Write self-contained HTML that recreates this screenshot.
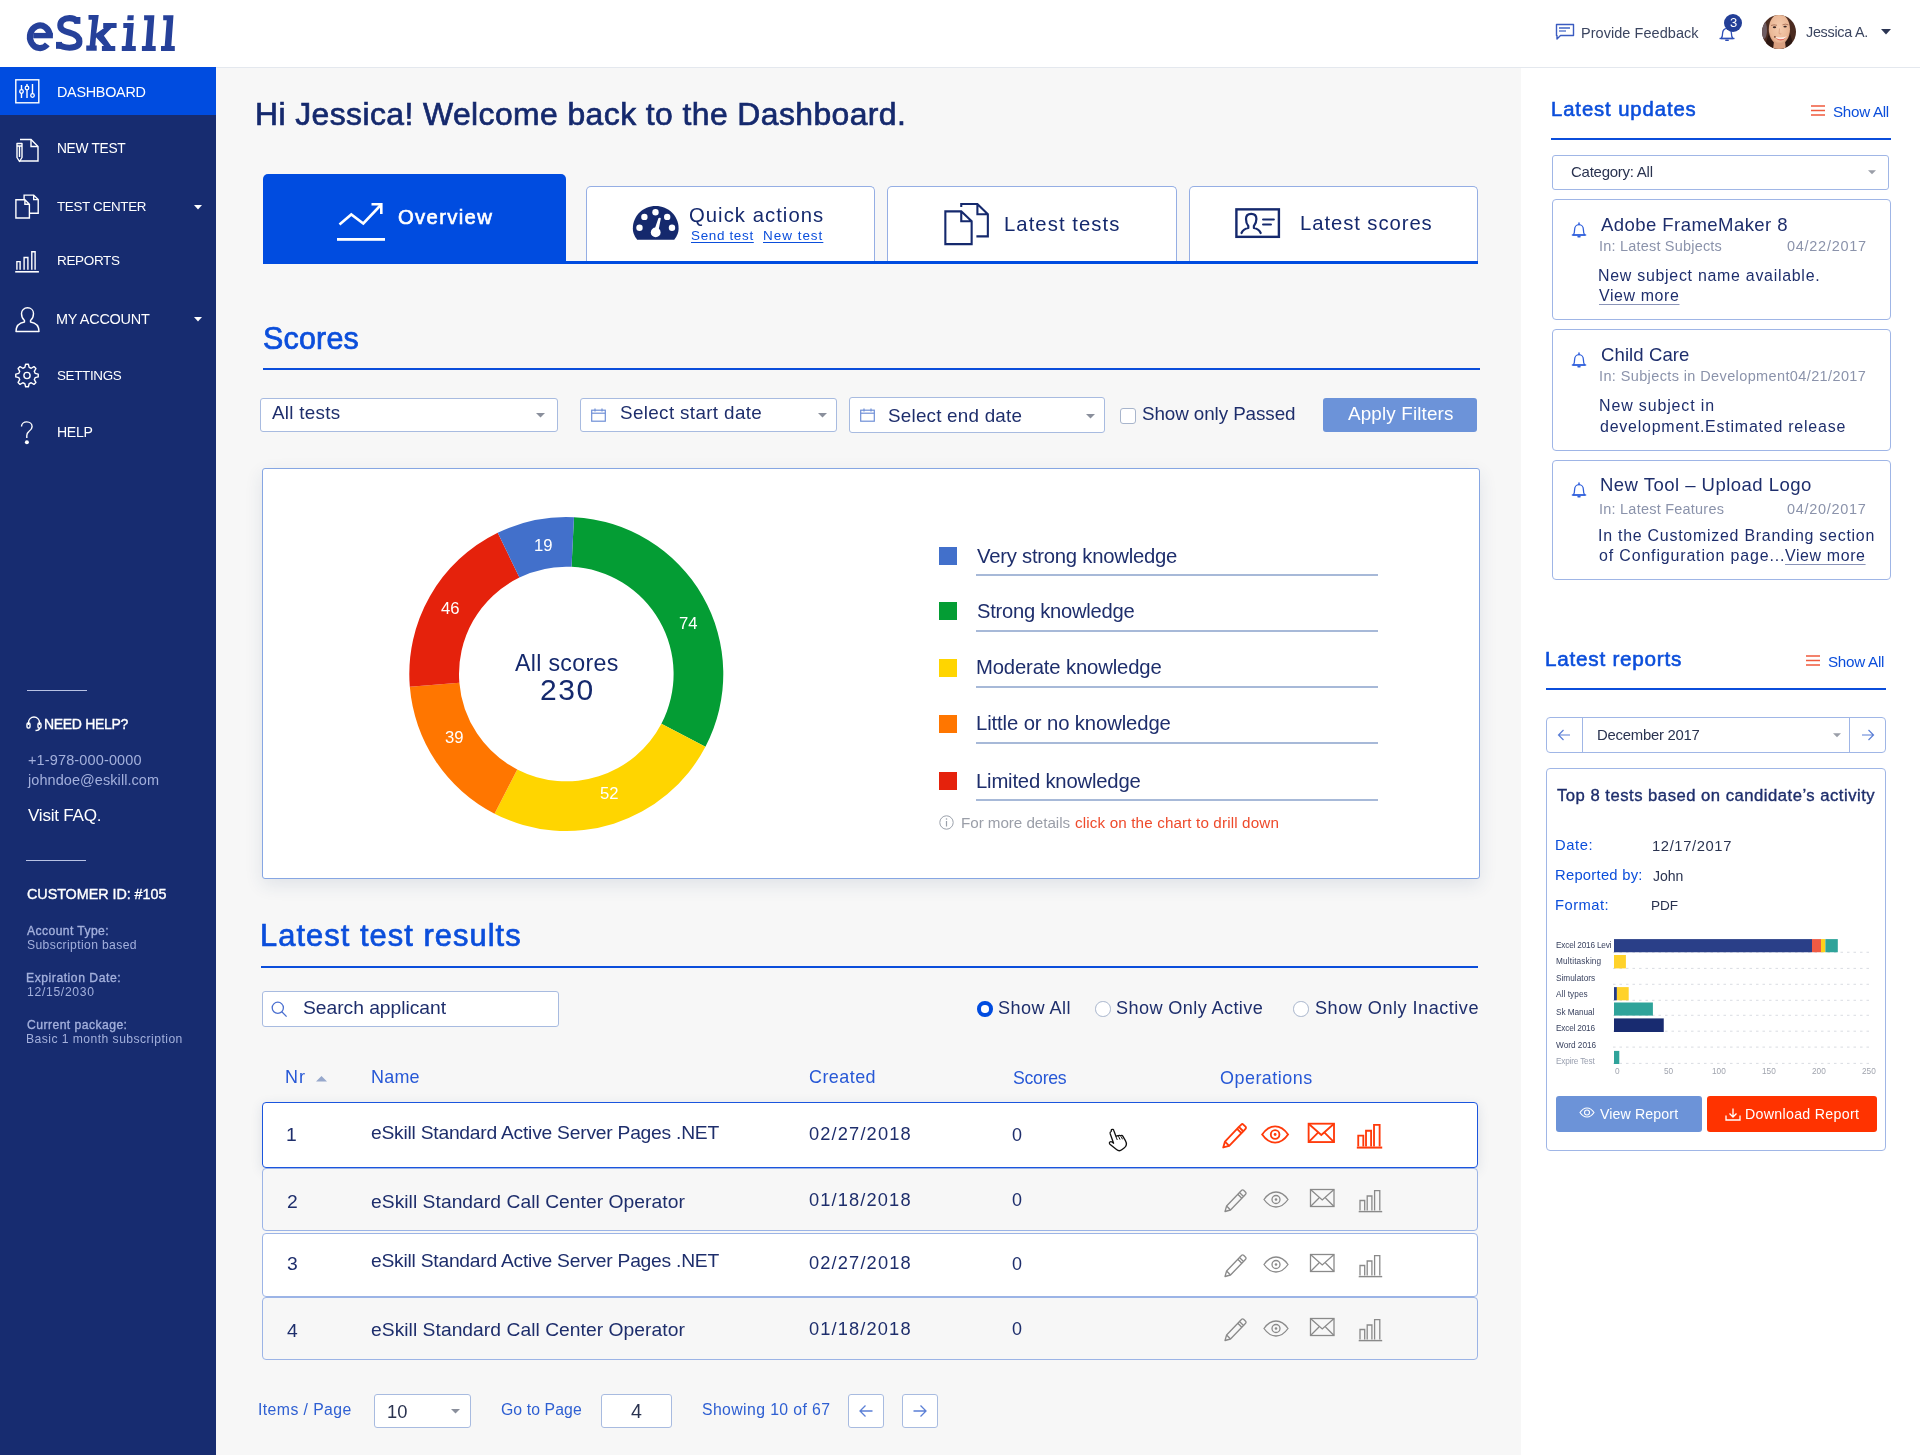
<!DOCTYPE html>
<html><head><meta charset="utf-8"><title>eSkill Dashboard</title>
<style>
html,body{margin:0;padding:0;}
body{width:1920px;height:1455px;position:relative;overflow:hidden;background:#f7f7f7;font-family:"Liberation Sans",sans-serif;}
.t{position:absolute;white-space:nowrap;will-change:transform;}
.a{position:absolute;}

.box{position:absolute;box-sizing:border-box;}
svg{position:absolute;overflow:visible;}

</style></head><body>
<div class="a" style="left:0;top:0;width:1920px;height:67px;background:#fff;border-bottom:1px solid #e4e8ee;box-sizing:content-box"></div>
<div class="a" style="left:0;top:67px;width:216px;height:1388px;background:#172c70"></div>
<div class="a" style="left:0;top:67px;width:216px;height:48px;background:#004ce0"></div>
<div class="a" style="left:1521px;top:68px;width:399px;height:1387px;background:#fff"></div>
<svg style="left:0;top:0" width="200" height="67" viewBox="0 0 200 67"><g fill="#26419a">
<path d="M144.1 15.2H154.4L152.2 45.9H155.7V50.9H141.9V45.9H145.6L147.6 20.3H144.1z"/>
<path d="M163.2 15.2H173.5L171.3 45.9H174.8V50.9H161V45.9H164.7L166.7 20.3H163.2z"/>
<path d="M127.6 15.2H133.8L133.4 20.3H127.2z"/>
<path d="M123.3 22.9H133.8L132 45.9H135.8V50.9H121.8V45.9H125.5L127.2 27.9H123.3z"/>
<path d="M88.5 15H98.75L96.3 33.4L104.1 27.9H103.2V22.9H116.6V27.9H111.5L103.9 35.8L111.1 45.9H115.25V50.9H101.9V45.9H104L96 37.2L95.3 45.6H96.7V50.8H86.25V45.6H89.7L92 19.8H88.5z"/>
<path d="M33.2 32.9H52.9V38.3H33.2z"/>
<rect x="74.2" y="17" width="6.2" height="6.9"/>
<rect x="56" y="41.9" width="6" height="6.9"/>
</g>
<path d="M49.9 35.8A10 11.25 0 1 0 47.3 44.4" fill="none" stroke="#26419a" stroke-width="6.2"/>
<path d="M77.4 21.5C75 18.8 72.5 18.1 69.5 18.1C63.6 18.1 60.3 21 60.3 25.3C60.3 30 64.3 31.4 69.8 32.8C75.6 34.3 79.4 36.4 79.4 41.6C79.4 46 75.6 47.7 69.5 47.7C64.8 47.7 61.2 46.7 59 44.3" fill="none" stroke="#26419a" stroke-width="6.1"/>
</svg>
<svg style="left:1555px;top:23px" width="20" height="18" viewBox="0 0 20 18">
<path d="M1.5 1.5h17v11h-13l-3.5 3.5v-3.5h-0.5z" fill="none" stroke="#3a5bc0" stroke-width="1.4" stroke-linejoin="round"/>
<rect x="4" y="4" width="11" height="2" fill="#6f8bd4"/><rect x="4" y="7" width="7" height="2" fill="#8aa0dc"/>
</svg>
<div class="t" style="left:1580.70px;top:25.68px;font:normal 400 14.49px/1 'Liberation Sans';color:#3b4560;letter-spacing:0.053px;">Provide Feedback</div>
<svg style="left:1718px;top:24px" width="18" height="18" viewBox="0 0 18 18">
<path d="M3 14.5c1.3-1.2 1.6-2.6 1.6-5.2 0-2.9 1.9-5 4.4-5s4.4 2.1 4.4 5c0 2.6 0.3 4 1.6 5.2z" fill="none" stroke="#2e4fb8" stroke-width="1.3" stroke-linejoin="round"/>
<path d="M1.5 14.5h15" stroke="#2e4fb8" stroke-width="1.3"/><path d="M7.8 16.2h2.4" stroke="#2e4fb8" stroke-width="1.5" stroke-linecap="round"/>
</svg>
<div class="a" style="left:1724px;top:14px;width:18px;height:18px;border-radius:50%;background:#233f97"></div>
<div class="t" style="left:1729.50px;top:16.42px;font:normal 400 13.04px/1 'Liberation Sans';color:#fff;">3</div>
<svg style="left:1762px;top:15px" width="34" height="34" viewBox="0 0 34 34">
<defs><clipPath id="avc"><circle cx="17" cy="17" r="17"/></clipPath>
<radialGradient id="skin" cx="0.5" cy="0.45" r="0.6"><stop offset="0" stop-color="#f6cdb0"/><stop offset="0.75" stop-color="#eab796"/><stop offset="1" stop-color="#c98a6a"/></radialGradient></defs>
<g clip-path="url(#avc)">
<rect width="34" height="34" fill="#4b2b20"/>
<ellipse cx="2" cy="15" rx="3" ry="9" fill="#6e5c62"/>
<path d="M3 34C4 26 6 20 9 14L26 14C29 20 31 27 31 34z" fill="#2e1812"/>
<ellipse cx="17.4" cy="14.2" rx="10.6" ry="15.2" fill="url(#skin)"/>
<path d="M12 26Q17.5 32 23 26L24 35H11z" fill="#d9a080"/>
<path d="M9 10.5Q12 9.2 15 10.3M20.5 9.8Q23.5 8.6 26.3 9.8" stroke="#a0664e" stroke-width="0.8" fill="none"/>
<ellipse cx="12.5" cy="12.3" rx="1.7" ry="0.95" fill="#3a2624"/><ellipse cx="23.1" cy="11.6" rx="1.7" ry="0.95" fill="#3a2624"/>
<path d="M17.5 13.5L17 18.5Q18 19.4 19.3 18.7" stroke="#d59878" stroke-width="0.7" fill="none"/>
<path d="M12.8 21.8Q19 27.5 25 21.2Q19 23.4 12.8 21.8z" fill="#fbeee8"/>
<path d="M13.5 23Q19 28.2 24.4 22.4Q19 26 13.5 23z" fill="#e0645c"/><circle cx="12.9" cy="21.9" r="0.8" fill="#5a2c24"/>
</g></svg>
<div class="t" style="left:1805.60px;top:25.19px;font:normal 400 14.36px/1 'Liberation Sans';color:#3b4560;letter-spacing:-0.272px;">Jessica A.</div>
<svg style="left:1881px;top:29px" width="10" height="6" viewBox="0 0 10 6"><path d="M0 0h10l-5 5.5z" fill="#2b3553"/></svg>
<div class="t" style="left:57.00px;top:84.79px;font:normal 400 14.36px/1 'Liberation Sans';color:#ffffff;letter-spacing:-0.261px;">DASHBOARD</div>
<div class="t" style="left:56.50px;top:142.30px;font:normal 400 13.76px/1 'Liberation Sans';color:#ffffff;letter-spacing:-0.306px;">NEW TEST</div>
<div class="t" style="left:57.30px;top:199.62px;font:normal 400 13.39px/1 'Liberation Sans';color:#ffffff;letter-spacing:-0.323px;">TEST CENTER</div>
<div class="t" style="left:56.50px;top:253.52px;font:normal 400 13.51px/1 'Liberation Sans';color:#ffffff;letter-spacing:-0.335px;">REPORTS</div>
<div class="t" style="left:56.20px;top:311.72px;font:normal 400 14.45px/1 'Liberation Sans';color:#ffffff;letter-spacing:-0.248px;">MY ACCOUNT</div>
<div class="t" style="left:56.70px;top:368.58px;font:normal 400 13.44px/1 'Liberation Sans';color:#ffffff;letter-spacing:-0.347px;">SETTINGS</div>
<div class="t" style="left:56.60px;top:425.00px;font:normal 400 14.12px/1 'Liberation Sans';color:#ffffff;letter-spacing:-0.316px;">HELP</div>
<svg style="left:193.5px;top:205px" width="8" height="5" viewBox="0 0 8 5"><path d="M0 0h8l-4 4.5z" fill="#fff"/></svg>
<svg style="left:193.5px;top:316.5px" width="8" height="5" viewBox="0 0 8 5"><path d="M0 0h8l-4 4.5z" fill="#fff"/></svg>
<svg style="left:15px;top:79px" width="25" height="25" viewBox="0 0 25 25">
<rect x="0.8" y="0.8" width="23" height="23" stroke="#fff" stroke-width="1.4" fill="none"/>
<path d="M6.5 6v13M12 5v14M17.5 5v13" stroke="#fff" stroke-width="1.4" fill="none"/>
<circle cx="6.5" cy="12.5" r="1.8" fill="#004ce0" stroke="#fff" stroke-width="1.3"/>
<circle cx="12" cy="9" r="1.8" fill="#004ce0" stroke="#fff" stroke-width="1.3"/>
<circle cx="17.5" cy="16.5" r="1.8" fill="#004ce0" stroke="#fff" stroke-width="1.3"/>
</svg>
<svg style="left:15px;top:137px" width="25" height="26" viewBox="0 0 25 26">
<path d="M5 2.5h11l7 7v14.5h-18" stroke="#fff" stroke-width="1.4" fill="none"/><path d="M16 2.5v7h7" stroke="#fff" stroke-width="1.4" fill="none"/>
<path d="M2 6.5h5v14l-2.5 4l-2.5-4z" stroke="#fff" stroke-width="1.4" fill="none" stroke-linejoin="round"/><path d="M2 9h5M4.5 9v11" stroke="#fff" stroke-width="1.4" fill="none"/>
</svg>
<svg style="left:15px;top:194px" width="25" height="26" viewBox="0 0 25 26">
<path d="M0.9 5.7H9.9L14.4 10.2V24H0.9zM9.9 5.7V10.2H14.4" stroke="#fff" stroke-width="1.4" fill="none"/>
<path d="M9.1 5.2V1.1H18.7L23.2 5.6V19.3H15M18.7 1.1V5.6H23.2" stroke="#fff" stroke-width="1.4" fill="none"/>
</svg>
<svg style="left:15px;top:251px" width="25" height="22" viewBox="0 0 25 22">
<path d="M1.9 18.7V10.6H5.1V18.7M9.1 18.7V6.5H12.9V18.7M16.8 18.7V0.8H20.1V18.7" stroke="#fff" stroke-width="1.4" fill="none"/><path d="M0.2 20.8H23.9" stroke="#fff" stroke-width="1.6"/>
</svg>
<svg style="left:15px;top:307px" width="25" height="26" viewBox="0 0 25 26">
<path d="M9.5 13.5c-2.2-1.8-3-4.5-3-7 0-3.3 2.6-5.7 6-5.7s6 2.4 6 5.7c0 2.5-0.8 5.2-3 7v1.5c5 0.8 8.5 4 8.5 9.5h-23c0-5.5 3.5-8.7 8.5-9.5z" stroke="#fff" stroke-width="1.4" fill="none" stroke-linejoin="round"/>
</svg>
<svg style="left:14px;top:362px" width="26" height="27" viewBox="0 0 26 27">
<path d="M10.83 5.39L11.62 2.28L14.38 2.28L15.17 5.39L17.20 6.23L19.96 4.60L21.90 6.54L20.27 9.30L21.11 11.33L24.22 12.12L24.22 14.88L21.11 15.67L20.27 17.70L21.90 20.46L19.96 22.40L17.20 20.77L15.17 21.61L14.38 24.72L11.62 24.72L10.83 21.61L8.80 20.77L6.04 22.40L4.10 20.46L5.73 17.70L4.89 15.67L1.78 14.88L1.78 12.12L4.89 11.33L5.73 9.30L4.10 6.54L6.04 4.60L8.80 6.23z" stroke="#fff" stroke-width="1.4" fill="none" stroke-linejoin="round"/>
<circle cx="13" cy="13.5" r="3.1" stroke="#fff" stroke-width="1.4" fill="none" stroke-width="1.6"/>
</svg>
<svg style="left:20px;top:421px" width="14" height="24" viewBox="0 0 14 24">
<path d="M1.5 5.5c0-2.6 2.3-4.6 5.3-4.6s5.3 2 5.3 4.8c0 2.4-1.6 3.6-3.3 4.9-1.4 1-2 2-2 4v2.5" stroke="#fff" stroke-width="1.4" fill="none"/>
<circle cx="6.9" cy="21.2" r="2" fill="#fff"/>
</svg>
<div class="a" style="left:27px;top:690px;width:60px;height:1px;background:#b8c2e4"></div>
<div class="a" style="left:26px;top:860px;width:60px;height:1px;background:#b8c2e4"></div>
<svg style="left:26px;top:716px" width="16" height="15" viewBox="0 0 16 15">
<path d="M2.5 9v-2.5c0-3 2.4-5.5 5.5-5.5s5.5 2.5 5.5 5.5v2.5" stroke="#fff" stroke-width="1.4" fill="none" stroke-width="1.2"/>
<rect x="1" y="7" width="3" height="5" rx="1.2" stroke="#fff" stroke-width="1.4" fill="none" stroke-width="1.2"/><rect x="12" y="7" width="3" height="5" rx="1.2" stroke="#fff" stroke-width="1.4" fill="none" stroke-width="1.2"/>
<path d="M13.5 12c0 1.5-1.5 2.5-4 2.5" stroke="#fff" stroke-width="1.4" fill="none" stroke-width="1.2"/>
</svg>
<div class="t" style="left:44.40px;top:717.39px;font:normal 400 14.01px/1 'Liberation Sans';color:#ffffff;letter-spacing:-0.306px;-webkit-text-stroke:0.35px #ffffff;">NEED HELP?</div>
<div class="t" style="left:27.50px;top:752.98px;font:normal 400 14.49px/1 'Liberation Sans';color:#a3b0dc;letter-spacing:0.144px;">+1-978-000-0000</div>
<div class="t" style="left:27.70px;top:772.98px;font:normal 400 14.49px/1 'Liberation Sans';color:#a3b0dc;letter-spacing:0.072px;">johndoe@eskill.com</div>
<div class="t" style="left:27.50px;top:807.47px;font:normal 400 17.1px/1 'Liberation Sans';color:#ffffff;letter-spacing:-0.237px;">Visit FAQ.</div>
<div class="t" style="left:26.70px;top:886.50px;font:normal 400 14.35px/1 'Liberation Sans';color:#ffffff;letter-spacing:-0.041px;-webkit-text-stroke:0.36px #ffffff;">CUSTOMER ID: #105</div>
<div class="t" style="left:26.70px;top:924.56px;font:normal 400 12.17px/1 'Liberation Sans';color:#a3b0dc;letter-spacing:0.404px;-webkit-text-stroke:0.34px #a3b0dc;">Account Type:</div>
<div class="t" style="left:26.70px;top:938.56px;font:normal 400 12.17px/1 'Liberation Sans';color:#a3b0dc;letter-spacing:0.363px;">Subscription based</div>
<div class="t" style="left:25.70px;top:972.46px;font:normal 400 12.17px/1 'Liberation Sans';color:#a3b0dc;letter-spacing:0.539px;-webkit-text-stroke:0.34px #a3b0dc;">Expiration Date:</div>
<div class="t" style="left:26.70px;top:986.46px;font:normal 400 12.17px/1 'Liberation Sans';color:#a3b0dc;letter-spacing:0.680px;">12/15/2030</div>
<div class="t" style="left:26.70px;top:1019.46px;font:normal 400 12.17px/1 'Liberation Sans';color:#a3b0dc;letter-spacing:0.449px;-webkit-text-stroke:0.34px #a3b0dc;">Current package:</div>
<div class="t" style="left:25.70px;top:1033.26px;font:normal 400 12.17px/1 'Liberation Sans';color:#a3b0dc;letter-spacing:0.444px;">Basic 1 month subscription</div>
<div class="t" style="left:254.50px;top:99.30px;font:normal 400 31.88px/1 'Liberation Sans';color:#15296d;letter-spacing:0.420px;-webkit-text-stroke:0.67px #15296d;">Hi Jessica! Welcome back to the Dashboard.</div>
<div class="box" style="left:263px;top:174px;width:303px;height:90px;background:#004ce0;border-radius:5px 5px 0 0"></div>
<div class="box" style="left:585.5px;top:186px;width:289.0px;height:77px;background:#fff;border:1px solid #95aee4;border-bottom:none;border-radius:5px 5px 0 0"></div>
<div class="box" style="left:887px;top:186px;width:289.5px;height:77px;background:#fff;border:1px solid #95aee4;border-bottom:none;border-radius:5px 5px 0 0"></div>
<div class="box" style="left:1188.5px;top:186px;width:289.0px;height:77px;background:#fff;border:1px solid #95aee4;border-bottom:none;border-radius:5px 5px 0 0"></div>
<div class="a" style="left:263px;top:261px;width:1215px;height:3px;background:#004ce0"></div>
<svg style="left:336px;top:202px" width="50" height="40" viewBox="0 0 50 40">
<path d="M3.5 22.5L15.3 12.5L27.3 21.5L44.8 3" fill="none" stroke="#fff" stroke-width="2.6" stroke-linejoin="miter"/>
<path d="M35.5 2.3h9.8v9.8" fill="none" stroke="#fff" stroke-width="2.6"/>
<rect x="1" y="36" width="48" height="2.8" fill="#fff"/>
</svg>
<div class="t" style="left:397.50px;top:206.55px;font:normal 400 20.29px/1 'Liberation Sans';color:#fff;letter-spacing:1.332px;-webkit-text-stroke:0.61px #fff;">Overview</div>
<svg style="left:632px;top:206px" width="48" height="35" viewBox="0 0 48 35">
<path d="M5.2 33.8C1.8 29.5 0.85 26 0.85 22.5C0.85 10 11 0.1 23.7 0.1S46.6 10 46.6 22.5C46.6 26 45.6 29.5 42.2 33.8z" fill="#15296d"/>
<circle cx="23.5" cy="6.2" r="3.2" fill="#fff"/><circle cx="12.4" cy="10.9" r="3.2" fill="#fff"/><circle cx="35.2" cy="10.9" r="3.2" fill="#fff"/>
<circle cx="7.5" cy="21.7" r="3.2" fill="#fff"/><circle cx="40" cy="21.7" r="3.2" fill="#fff"/>
<path d="M21.8 25.5L26.4 12.3C26.7 11.4 28.9 11.6 28.8 12.6L26.2 26.2z" fill="#fff"/><circle cx="23.7" cy="26.4" r="4.9" fill="#fff"/>
</svg>
<div class="t" style="left:689.40px;top:204.65px;font:normal 400 20.29px/1 'Liberation Sans';color:#15296d;letter-spacing:1.034px;">Quick actions</div>
<div class="t" style="left:691.00px;top:229.14px;font:normal 400 13.48px/1 'Liberation Sans';color:#0b4edb;letter-spacing:0.654px;text-decoration:underline;text-underline-offset:2px;">Send test</div>
<div class="t" style="left:763.40px;top:229.14px;font:normal 400 13.48px/1 'Liberation Sans';color:#0b4edb;letter-spacing:0.992px;text-decoration:underline;text-underline-offset:2px;">New test</div>
<svg style="left:943px;top:202px" width="48" height="45" viewBox="0 0 48 45">
<path d="M2.35 9.35H18.25L28.65 19.25V42.15H2.35zM18.25 9.35V19.25H28.65" fill="none" stroke="#15296d" stroke-width="2.1"/>
<path d="M18.25 5V2.05H34.4L44.85 12.2V34.35H33.4M34.4 2.05V12.2H44.85" fill="none" stroke="#15296d" stroke-width="2.1"/>
</svg>
<div class="t" style="left:1003.80px;top:213.55px;font:normal 400 20.29px/1 'Liberation Sans';color:#15296d;letter-spacing:1.057px;">Latest tests</div>
<svg style="left:1234px;top:207px" width="48" height="33" viewBox="0 0 48 33">
<rect x="2.4" y="2.35" width="42.5" height="27.5" fill="none" stroke="#15296d" stroke-width="2.4"/>
<path d="M7.5 26C8.8 23 11.5 21.5 14.3 21V19C12.5 17 12 14.5 12 12C12 8.5 14 6.8 17.2 6.8C20.4 6.8 22.4 8.5 22.4 12C22.4 14.5 21.5 17 19.9 19V21C22.7 21.5 25.4 23 26.7 26" fill="none" stroke="#15296d" stroke-width="2.2" stroke-linecap="round" stroke-linejoin="round"/>
<path d="M29.1 12.5H39.8M29.1 17.5H36.9" stroke="#15296d" stroke-width="2.2" stroke-linecap="round"/>
</svg>
<div class="t" style="left:1300.40px;top:213.45px;font:normal 400 20.29px/1 'Liberation Sans';color:#15296d;letter-spacing:0.927px;">Latest scores</div>
<div class="t" style="left:262.60px;top:323.13px;font:normal 400 30.43px/1 'Liberation Sans';color:#0b4edb;letter-spacing:0.226px;-webkit-text-stroke:0.73px #0b4edb;">Scores</div>
<div class="a" style="left:263px;top:368px;width:1217px;height:2px;background:#0b4edb"></div>
<div class="box" style="left:259.7px;top:397.5px;width:298.7px;height:34.89999999999998px;background:#fff;border:1px solid #a8bbe0;border-radius:3px"></div>
<div class="t" style="left:272.00px;top:404.39px;font:normal 400 18.84px/1 'Liberation Sans';color:#1e2e6c;letter-spacing:0.287px;">All tests</div>
<svg style="left:535.8px;top:413px" width="9" height="5" viewBox="0 0 9 5"><path d="M0 0h9l-4.5 4.5z" fill="#8a8f9c"/></svg>
<div class="box" style="left:580.3px;top:397.5px;width:256.70000000000005px;height:34.89999999999998px;background:#fff;border:1px solid #a8bbe0;border-radius:3px"></div>
<svg style="left:590.6px;top:407.5px" width="15" height="14" viewBox="0 0 15 14">
<rect x="0.7" y="2.2" width="13.6" height="11" fill="none" stroke="#6f8fd6" stroke-width="1.2"/><path d="M0.7 5.2h13.6" stroke="#6f8fd6" stroke-width="1.2"/>
<path d="M4 0.5v3M11 0.5v3" stroke="#6f8fd6" stroke-width="1.2"/></svg>
<div class="t" style="left:619.70px;top:404.39px;font:normal 400 18.84px/1 'Liberation Sans';color:#1e2e6c;letter-spacing:0.357px;">Select start date</div>
<svg style="left:817.7px;top:413px" width="9" height="5" viewBox="0 0 9 5"><path d="M0 0h9l-4.5 4.5z" fill="#8a8f9c"/></svg>
<div class="box" style="left:849.3px;top:397.2px;width:256.10000000000014px;height:35.400000000000034px;background:#fff;border:1px solid #a8bbe0;border-radius:3px"></div>
<svg style="left:859.6px;top:408px" width="15" height="14" viewBox="0 0 15 14">
<rect x="0.7" y="2.2" width="13.6" height="11" fill="none" stroke="#6f8fd6" stroke-width="1.2"/><path d="M0.7 5.2h13.6" stroke="#6f8fd6" stroke-width="1.2"/>
<path d="M4 0.5v3M11 0.5v3" stroke="#6f8fd6" stroke-width="1.2"/></svg>
<div class="t" style="left:888.00px;top:406.99px;font:normal 400 18.84px/1 'Liberation Sans';color:#1e2e6c;letter-spacing:0.223px;">Select end date</div>
<svg style="left:1085.8px;top:414px" width="9" height="5" viewBox="0 0 9 5"><path d="M0 0h9l-4.5 4.5z" fill="#8a8f9c"/></svg>
<div class="box" style="left:1120px;top:407.5px;width:16px;height:16px;background:#fff;border:1px solid #a8b5cc;border-radius:3px"></div>
<div class="t" style="left:1141.50px;top:405.24px;font:normal 400 18.84px/1 'Liberation Sans';color:#1e2e6c;letter-spacing:-0.095px;">Show only Passed</div>
<div class="box" style="left:1323px;top:398px;width:154px;height:34px;background:#6c93d9;border-radius:3px"></div>
<div class="t" style="left:1348.00px;top:405.24px;font:normal 400 18.84px/1 'Liberation Sans';color:#fff;letter-spacing:0.153px;">Apply Filters</div>
<div class="box" style="left:262px;top:468px;width:1218px;height:411px;background:#fff;border:1px solid #86a6e3;border-radius:3px;box-shadow:0 6px 18px rgba(40,60,110,.11)"></div>
<svg style="left:0;top:0" width="1920" height="1455"><path d="M573.97 517.19A157 157 0 0 1 705.43 746.74L661.39 723.71A107.3 107.3 0 0 0 571.54 566.83z" fill="#049d34"/><path d="M705.43 746.74A157 157 0 0 1 494.54 813.64L517.25 769.43A107.3 107.3 0 0 0 661.39 723.71z" fill="#ffd500"/><path d="M494.54 813.64A157 157 0 0 1 409.83 686.86L459.36 682.79A107.3 107.3 0 0 0 517.25 769.43z" fill="#ff7600"/><path d="M409.83 686.86A157 157 0 0 1 497.72 532.77L519.43 577.48A107.3 107.3 0 0 0 459.36 682.79z" fill="#e5220c"/><path d="M497.72 532.77A157 157 0 0 1 573.97 517.19L571.54 566.83A107.3 107.3 0 0 0 519.43 577.48z" fill="#4270cb"/></svg>
<div class="t" style="left:534.37px;top:538.33px;font:normal 400 16.67px/1 'Liberation Sans';color:#fff;">19</div>
<div class="t" style="left:678.67px;top:615.83px;font:normal 400 16.67px/1 'Liberation Sans';color:#fff;">74</div>
<div class="t" style="left:599.57px;top:785.83px;font:normal 400 16.67px/1 'Liberation Sans';color:#fff;">52</div>
<div class="t" style="left:444.57px;top:729.53px;font:normal 400 16.67px/1 'Liberation Sans';color:#fff;">39</div>
<div class="t" style="left:441.37px;top:601.03px;font:normal 400 16.67px/1 'Liberation Sans';color:#fff;">46</div>
<div class="t" style="left:515.05px;top:651.79px;font:normal 400 23.19px/1 'Liberation Sans';color:#15296d;letter-spacing:0.310px;">All scores</div>
<div class="t" style="left:540.00px;top:675.10px;font:normal 400 30px/1 'Liberation Sans';color:#15296d;letter-spacing:1.615px;">230</div>
<div class="a" style="left:939px;top:547px;width:18px;height:18px;background:#4270cb"></div>
<div class="t" style="left:976.80px;top:545.75px;font:normal 400 20.29px/1 'Liberation Sans';color:#1e2e6c;letter-spacing:-0.245px;">Very strong knowledge</div>
<div class="a" style="left:939px;top:602.4px;width:18px;height:18px;background:#049d34"></div>
<div class="t" style="left:976.80px;top:601.16px;font:normal 400 20.17px/1 'Liberation Sans';color:#1e2e6c;letter-spacing:-0.250px;">Strong knowledge</div>
<div class="a" style="left:939px;top:659.2px;width:18px;height:18px;background:#ffd500"></div>
<div class="t" style="left:975.80px;top:657.35px;font:normal 400 20.29px/1 'Liberation Sans';color:#1e2e6c;letter-spacing:-0.153px;">Moderate knowledge</div>
<div class="a" style="left:939px;top:714.5px;width:18px;height:18px;background:#ff7600"></div>
<div class="t" style="left:975.80px;top:713.25px;font:normal 400 20.29px/1 'Liberation Sans';color:#1e2e6c;letter-spacing:-0.116px;">Little or no knowledge</div>
<div class="a" style="left:939px;top:772px;width:18px;height:18px;background:#e5220c"></div>
<div class="t" style="left:975.80px;top:770.75px;font:normal 400 20.29px/1 'Liberation Sans';color:#1e2e6c;letter-spacing:-0.200px;">Limited knowledge</div>
<div class="a" style="left:976px;top:574px;width:401.5px;height:2px;background:#a7b9d8"></div>
<div class="a" style="left:976px;top:629.5px;width:401.5px;height:2px;background:#a7b9d8"></div>
<div class="a" style="left:976px;top:686px;width:401.5px;height:2px;background:#a7b9d8"></div>
<div class="a" style="left:976px;top:741.5px;width:401.5px;height:2px;background:#a7b9d8"></div>
<div class="a" style="left:976px;top:799px;width:401.5px;height:2px;background:#a7b9d8"></div>
<svg style="left:939px;top:815px" width="15" height="15" viewBox="0 0 15 15"><circle cx="7.5" cy="7.5" r="6.7" fill="none" stroke="#9aa0aa" stroke-width="1"/>
<path d="M7.5 6v5.5" stroke="#9aa0aa" stroke-width="1.2"/><circle cx="7.5" cy="4" r="0.8" fill="#9aa0aa"/></svg>
<div class="t" style="left:960.50px;top:815.26px;font:normal 400 15.22px/1 'Liberation Sans';color:#9a9ea8;letter-spacing:-0.056px;">For more details</div>
<div class="t" style="left:1074.60px;top:815.26px;font:normal 400 15.22px/1 'Liberation Sans';color:#ee4a2b;letter-spacing:0.137px;">click on the chart to drill down</div>
<div class="t" style="left:259.50px;top:921.36px;font:normal 400 30.87px/1 'Liberation Sans';color:#0b4edb;letter-spacing:1.044px;-webkit-text-stroke:0.68px #0b4edb;">Latest test results</div>
<div class="a" style="left:261px;top:966px;width:1217px;height:2px;background:#0b4edb"></div>
<div class="box" style="left:261.5px;top:991px;width:297px;height:35.5px;background:#fff;border:1px solid #a8bbe0;border-radius:3px"></div>
<svg style="left:271px;top:1001px" width="17" height="17" viewBox="0 0 17 17"><circle cx="6.8" cy="6.8" r="5.6" fill="none" stroke="#4a6fd0" stroke-width="1.3"/>
<path d="M10.8 10.8l4.8 4.8" stroke="#4a6fd0" stroke-width="1.3"/></svg>
<div class="t" style="left:303.20px;top:998.41px;font:normal 400 19.28px/1 'Liberation Sans';color:#1e2e6c;letter-spacing:-0.031px;">Search applicant</div>
<div class="box" style="left:977.4px;top:1001px;width:15.5px;height:15.5px;border-radius:50%;background:#fff;border:4.5px solid #004ce0"></div>
<div class="box" style="left:1095.3px;top:1001px;width:15.5px;height:15.5px;border-radius:50%;background:#fff;border:1px solid #a8b5cc"></div>
<div class="box" style="left:1293.2px;top:1001px;width:15.5px;height:15.5px;border-radius:50%;background:#fff;border:1px solid #a8b5cc"></div>
<div class="t" style="left:997.80px;top:998.60px;font:normal 400 18.12px/1 'Liberation Sans';color:#1e2e6c;letter-spacing:0.452px;">Show All</div>
<div class="t" style="left:1116.00px;top:998.60px;font:normal 400 18.12px/1 'Liberation Sans';color:#1e2e6c;letter-spacing:0.391px;">Show Only Active</div>
<div class="t" style="left:1314.70px;top:998.60px;font:normal 400 18.12px/1 'Liberation Sans';color:#1e2e6c;letter-spacing:0.498px;">Show Only Inactive</div>
<div class="t" style="left:285.00px;top:1069.43px;font:normal 400 17.97px/1 'Liberation Sans';color:#2758d6;letter-spacing:1.035px;">Nr</div>
<svg style="left:315.6px;top:1076px" width="11" height="6" viewBox="0 0 11 6"><path d="M0 5.5h11l-5.5-5.5z" fill="#97a8cc"/></svg>
<div class="t" style="left:371.00px;top:1069.43px;font:normal 400 17.97px/1 'Liberation Sans';color:#2758d6;letter-spacing:0.232px;">Name</div>
<div class="t" style="left:808.80px;top:1069.43px;font:normal 400 17.97px/1 'Liberation Sans';color:#2758d6;letter-spacing:0.452px;">Created</div>
<div class="t" style="left:1013.30px;top:1069.86px;font:normal 400 17.7px/1 'Liberation Sans';color:#2758d6;letter-spacing:-0.281px;">Scores</div>
<div class="t" style="left:1220.30px;top:1069.63px;font:normal 400 17.97px/1 'Liberation Sans';color:#2758d6;letter-spacing:0.484px;">Operations</div>
<div class="box" style="left:261.5px;top:1102px;width:1216.5px;height:65.5px;background:#fff;border:1.6px solid #1b55de;border-radius:4px;box-shadow:0 3px 12px rgba(40,60,110,.13)"></div>
<div class="t" style="left:285.50px;top:1124.61px;font:normal 400 19.28px/1 'Liberation Sans';color:#1e2e6c;">1</div>
<div class="t" style="left:371.40px;top:1123.11px;font:normal 400 19.28px/1 'Liberation Sans';color:#1e2e6c;letter-spacing:-0.242px;">eSkill Standard Active Server Pages .NET</div>
<div class="t" style="left:809.30px;top:1125.28px;font:normal 400 18.26px/1 'Liberation Sans';color:#1e2e6c;letter-spacing:1.146px;">02/27/2018</div>
<div class="t" style="left:1012.00px;top:1127.43px;font:normal 400 17.97px/1 'Liberation Sans';color:#1e2e6c;">0</div>
<div class="box" style="left:261.5px;top:1168px;width:1216.5px;height:63px;background:#f7f7f7;border:1px solid #9cb4e6;border-radius:4px"></div>
<div class="t" style="left:286.50px;top:1191.91px;font:normal 400 19.28px/1 'Liberation Sans';color:#1e2e6c;">2</div>
<div class="t" style="left:371.40px;top:1191.91px;font:normal 400 19.28px/1 'Liberation Sans';color:#1e2e6c;letter-spacing:0.032px;">eSkill Standard Call Center Operator</div>
<div class="t" style="left:809.30px;top:1190.58px;font:normal 400 18.26px/1 'Liberation Sans';color:#1e2e6c;letter-spacing:1.135px;">01/18/2018</div>
<div class="t" style="left:1012.00px;top:1192.33px;font:normal 400 17.97px/1 'Liberation Sans';color:#1e2e6c;">0</div>
<div class="box" style="left:261.5px;top:1232.5px;width:1216.5px;height:64.0px;background:#fff;border:1px solid #9cb4e6;border-radius:4px"></div>
<div class="t" style="left:286.50px;top:1253.61px;font:normal 400 19.28px/1 'Liberation Sans';color:#1e2e6c;">3</div>
<div class="t" style="left:371.40px;top:1250.61px;font:normal 400 19.28px/1 'Liberation Sans';color:#1e2e6c;letter-spacing:-0.242px;">eSkill Standard Active Server Pages .NET</div>
<div class="t" style="left:809.30px;top:1254.28px;font:normal 400 18.26px/1 'Liberation Sans';color:#1e2e6c;letter-spacing:1.146px;">02/27/2018</div>
<div class="t" style="left:1012.00px;top:1256.33px;font:normal 400 17.97px/1 'Liberation Sans';color:#1e2e6c;">0</div>
<div class="box" style="left:261.5px;top:1296.8px;width:1216.5px;height:63.700000000000045px;background:#f7f7f7;border:1px solid #9cb4e6;border-radius:4px"></div>
<div class="t" style="left:286.50px;top:1320.61px;font:normal 400 19.28px/1 'Liberation Sans';color:#1e2e6c;">4</div>
<div class="t" style="left:371.40px;top:1320.41px;font:normal 400 19.28px/1 'Liberation Sans';color:#1e2e6c;letter-spacing:0.032px;">eSkill Standard Call Center Operator</div>
<div class="t" style="left:809.30px;top:1319.78px;font:normal 400 18.26px/1 'Liberation Sans';color:#1e2e6c;letter-spacing:1.135px;">01/18/2018</div>
<div class="t" style="left:1012.00px;top:1321.33px;font:normal 400 17.97px/1 'Liberation Sans';color:#1e2e6c;">0</div>
<svg style="left:1219.7px;top:1120.5px" width="30" height="28" viewBox="0 0 30 28">
<g transform="scale(1.08)">
<path d="M3 24.5l1.6-5.5L17.5 5.5l4 4L8.5 23z M4.6 19l3.9 4" fill="none" stroke="#ff3a0a" stroke-width="1.7" stroke-linejoin="round"/>
<path d="M17.5 5.5l2.2-2.2c0.6-0.6 1.3-0.6 1.9 0l2 2c0.6 0.6 0.6 1.3 0 1.9l-2.1 2.3M15.8 7.3l4 4" fill="none" stroke="#ff3a0a" stroke-width="1.7"/>
</g></svg>
<svg style="left:1259.7px;top:1120.5px" width="32" height="28" viewBox="0 0 32 28">
<g transform="scale(1.08)">
<path d="M2 12.5C5.5 7.5 9.5 5 14 5s8.5 2.5 12 7.5c-3.5 5-7.5 7.5-12 7.5S5.5 17.5 2 12.5z" fill="none" stroke="#ff3a0a" stroke-width="1.7"/>
<circle cx="14" cy="12.5" r="4" fill="none" stroke="#ff3a0a" stroke-width="1.7"/><circle cx="14" cy="12.5" r="1.3" fill="#ff3a0a"/>
</g></svg>
<svg style="left:1306.7px;top:1120.5px" width="32" height="28" viewBox="0 0 32 28">
<g transform="scale(1.08)">
<rect x="1.5" y="2.5" width="23.5" height="17" fill="none" stroke="#ff3a0a" stroke-width="1.7"/>
<path d="M1.5 2.5l11.75 10.5L25 2.5M1.5 19.5l8.5-8.5M25 19.5l-8.5-8.5" fill="none" stroke="#ff3a0a" stroke-width="1.7"/>
</g></svg>
<svg style="left:1354.7px;top:1120.5px" width="30" height="30" viewBox="0 0 30 30">
<g transform="scale(1.08)">
<path d="M3 23.5V13.5H7.7V23.5M10.2 23.5V9H14.9V23.5M17.6 23.5V3.6H22.8V23.5" fill="none" stroke="#ff3a0a" stroke-width="1.7"/>
<path d="M1.7 24.6H25.2" stroke="#ff3a0a" stroke-width="1.87"/>
</g></svg>
<svg style="left:1222px;top:1186.5px" width="30" height="28" viewBox="0 0 30 28">
<g transform="scale(1.0)">
<path d="M3 24.5l1.6-5.5L17.5 5.5l4 4L8.5 23z M4.6 19l3.9 4" fill="none" stroke="#8a8a8a" stroke-width="1.3" stroke-linejoin="round"/>
<path d="M17.5 5.5l2.2-2.2c0.6-0.6 1.3-0.6 1.9 0l2 2c0.6 0.6 0.6 1.3 0 1.9l-2.1 2.3M15.8 7.3l4 4" fill="none" stroke="#8a8a8a" stroke-width="1.3"/>
</g></svg>
<svg style="left:1262px;top:1186.5px" width="32" height="28" viewBox="0 0 32 28">
<g transform="scale(1.0)">
<path d="M2 12.5C5.5 7.5 9.5 5 14 5s8.5 2.5 12 7.5c-3.5 5-7.5 7.5-12 7.5S5.5 17.5 2 12.5z" fill="none" stroke="#8a8a8a" stroke-width="1.3"/>
<circle cx="14" cy="12.5" r="4" fill="none" stroke="#8a8a8a" stroke-width="1.3"/><circle cx="14" cy="12.5" r="1.3" fill="#8a8a8a"/>
</g></svg>
<svg style="left:1309px;top:1186.5px" width="32" height="28" viewBox="0 0 32 28">
<g transform="scale(1.0)">
<rect x="1.5" y="2.5" width="23.5" height="17" fill="none" stroke="#8a8a8a" stroke-width="1.3"/>
<path d="M1.5 2.5l11.75 10.5L25 2.5M1.5 19.5l8.5-8.5M25 19.5l-8.5-8.5" fill="none" stroke="#8a8a8a" stroke-width="1.3"/>
</g></svg>
<svg style="left:1357px;top:1186.5px" width="30" height="30" viewBox="0 0 30 30">
<g transform="scale(1.0)">
<path d="M3 23.5V13.5H7.7V23.5M10.2 23.5V9H14.9V23.5M17.6 23.5V3.6H22.8V23.5" fill="none" stroke="#8a8a8a" stroke-width="1.3"/>
<path d="M1.7 24.6H25.2" stroke="#8a8a8a" stroke-width="1.4300000000000002"/>
</g></svg>
<svg style="left:1222px;top:1251.5px" width="30" height="28" viewBox="0 0 30 28">
<g transform="scale(1.0)">
<path d="M3 24.5l1.6-5.5L17.5 5.5l4 4L8.5 23z M4.6 19l3.9 4" fill="none" stroke="#8a8a8a" stroke-width="1.3" stroke-linejoin="round"/>
<path d="M17.5 5.5l2.2-2.2c0.6-0.6 1.3-0.6 1.9 0l2 2c0.6 0.6 0.6 1.3 0 1.9l-2.1 2.3M15.8 7.3l4 4" fill="none" stroke="#8a8a8a" stroke-width="1.3"/>
</g></svg>
<svg style="left:1262px;top:1251.5px" width="32" height="28" viewBox="0 0 32 28">
<g transform="scale(1.0)">
<path d="M2 12.5C5.5 7.5 9.5 5 14 5s8.5 2.5 12 7.5c-3.5 5-7.5 7.5-12 7.5S5.5 17.5 2 12.5z" fill="none" stroke="#8a8a8a" stroke-width="1.3"/>
<circle cx="14" cy="12.5" r="4" fill="none" stroke="#8a8a8a" stroke-width="1.3"/><circle cx="14" cy="12.5" r="1.3" fill="#8a8a8a"/>
</g></svg>
<svg style="left:1309px;top:1251.5px" width="32" height="28" viewBox="0 0 32 28">
<g transform="scale(1.0)">
<rect x="1.5" y="2.5" width="23.5" height="17" fill="none" stroke="#8a8a8a" stroke-width="1.3"/>
<path d="M1.5 2.5l11.75 10.5L25 2.5M1.5 19.5l8.5-8.5M25 19.5l-8.5-8.5" fill="none" stroke="#8a8a8a" stroke-width="1.3"/>
</g></svg>
<svg style="left:1357px;top:1251.5px" width="30" height="30" viewBox="0 0 30 30">
<g transform="scale(1.0)">
<path d="M3 23.5V13.5H7.7V23.5M10.2 23.5V9H14.9V23.5M17.6 23.5V3.6H22.8V23.5" fill="none" stroke="#8a8a8a" stroke-width="1.3"/>
<path d="M1.7 24.6H25.2" stroke="#8a8a8a" stroke-width="1.4300000000000002"/>
</g></svg>
<svg style="left:1222px;top:1315.5px" width="30" height="28" viewBox="0 0 30 28">
<g transform="scale(1.0)">
<path d="M3 24.5l1.6-5.5L17.5 5.5l4 4L8.5 23z M4.6 19l3.9 4" fill="none" stroke="#8a8a8a" stroke-width="1.3" stroke-linejoin="round"/>
<path d="M17.5 5.5l2.2-2.2c0.6-0.6 1.3-0.6 1.9 0l2 2c0.6 0.6 0.6 1.3 0 1.9l-2.1 2.3M15.8 7.3l4 4" fill="none" stroke="#8a8a8a" stroke-width="1.3"/>
</g></svg>
<svg style="left:1262px;top:1315.5px" width="32" height="28" viewBox="0 0 32 28">
<g transform="scale(1.0)">
<path d="M2 12.5C5.5 7.5 9.5 5 14 5s8.5 2.5 12 7.5c-3.5 5-7.5 7.5-12 7.5S5.5 17.5 2 12.5z" fill="none" stroke="#8a8a8a" stroke-width="1.3"/>
<circle cx="14" cy="12.5" r="4" fill="none" stroke="#8a8a8a" stroke-width="1.3"/><circle cx="14" cy="12.5" r="1.3" fill="#8a8a8a"/>
</g></svg>
<svg style="left:1309px;top:1315.5px" width="32" height="28" viewBox="0 0 32 28">
<g transform="scale(1.0)">
<rect x="1.5" y="2.5" width="23.5" height="17" fill="none" stroke="#8a8a8a" stroke-width="1.3"/>
<path d="M1.5 2.5l11.75 10.5L25 2.5M1.5 19.5l8.5-8.5M25 19.5l-8.5-8.5" fill="none" stroke="#8a8a8a" stroke-width="1.3"/>
</g></svg>
<svg style="left:1357px;top:1315.5px" width="30" height="30" viewBox="0 0 30 30">
<g transform="scale(1.0)">
<path d="M3 23.5V13.5H7.7V23.5M10.2 23.5V9H14.9V23.5M17.6 23.5V3.6H22.8V23.5" fill="none" stroke="#8a8a8a" stroke-width="1.3"/>
<path d="M1.7 24.6H25.2" stroke="#8a8a8a" stroke-width="1.4300000000000002"/>
</g></svg>
<svg style="left:1105px;top:1127px" width="26" height="26" viewBox="0 0 26 26">
<path d="M6.5 2.5c1-0.5 2 0 2.3 1l2.2 6c0.5-0.8 1.6-1 2.3-0.4 0.4-0.8 1.6-1 2.3-0.3 0.6-0.6 1.7-0.5 2.2 0.3l2.6 4.5c1.5 2.6 1 5.6-1.3 7.4l-2 1.6c-1.6 1.3-4 1.3-5.6 0l-6.6-5.4c-0.7-0.6-0.7-1.6 0-2.2 0.6-0.5 1.5-0.5 2.1 0l1.6 1.2-3.4-9.4c-0.3-1 0-2 0.9-2.3z" fill="#fff" stroke="#111" stroke-width="1.3" stroke-linejoin="round"/>
<path d="M11 9.8l1.3 3.2M13.6 9.4l1.4 3.2M16.2 9.5l1.3 2.8" stroke="#111" stroke-width="1"/>
</svg>
<div class="t" style="left:258.30px;top:1402.47px;font:normal 400 15.8px/1 'Liberation Sans';color:#2e5fd2;letter-spacing:0.419px;">Items / Page</div>
<div class="box" style="left:374.1px;top:1393.5px;width:97.19999999999999px;height:34.700000000000045px;background:#fff;border:1px solid #a8bbe0;border-radius:3px"></div>
<div class="t" style="left:386.60px;top:1403.03px;font:normal 400 18.32px/1 'Liberation Sans';color:#2a3350;letter-spacing:0.115px;">10</div>
<svg style="left:450.8px;top:1408.5px" width="9" height="5" viewBox="0 0 9 5"><path d="M0 0h9l-4.5 4.5z" fill="#8a8f9c"/></svg>
<div class="t" style="left:501.00px;top:1402.47px;font:normal 400 15.8px/1 'Liberation Sans';color:#2e5fd2;letter-spacing:0.085px;">Go to Page</div>
<div class="box" style="left:601.1px;top:1393.5px;width:71.29999999999995px;height:34.700000000000045px;background:#fff;border:1px solid #a8bbe0;border-radius:3px"></div>
<div class="t" style="left:631.20px;top:1401.97px;font:normal 400 19.57px/1 'Liberation Sans';color:#2a3350;">4</div>
<div class="t" style="left:701.70px;top:1402.47px;font:normal 400 15.8px/1 'Liberation Sans';color:#2e5fd2;letter-spacing:0.400px;">Showing 10 of 67</div>
<div class="box" style="left:848.2px;top:1393.5px;width:35.39999999999998px;height:34.700000000000045px;background:#fff;border:1px solid #a8bbe0;border-radius:3px"></div>
<div class="box" style="left:902.2px;top:1393.5px;width:35.39999999999998px;height:34.700000000000045px;background:#fff;border:1px solid #a8bbe0;border-radius:3px"></div>
<svg style="left:858px;top:1404px" width="16" height="14" viewBox="0 0 16 14"><path d="M14.5 7H2M7.5 1.5L2 7l5.5 5.5" fill="none" stroke="#5b7fd6" stroke-width="1.3"/></svg>
<svg style="left:912px;top:1404px" width="16" height="14" viewBox="0 0 16 14"><path d="M1.5 7H14M8.5 1.5L14 7l-5.5 5.5" fill="none" stroke="#5b7fd6" stroke-width="1.3"/></svg>
<div class="t" style="left:1550.70px;top:98.85px;font:normal 400 20.29px/1 'Liberation Sans';color:#0b4edb;letter-spacing:0.899px;-webkit-text-stroke:0.57px #0b4edb;">Latest updates</div>
<svg style="left:1811px;top:104.5px" width="15" height="12" viewBox="0 0 15 12"><path d="M0 1h14M0 5.5h14M0 10h14" stroke="#f05a3c" stroke-width="1.5"/></svg>
<div class="t" style="left:1832.50px;top:103.59px;font:normal 400 15.19px/1 'Liberation Sans';color:#0b4edb;letter-spacing:-0.288px;">Show All</div>
<div class="a" style="left:1551px;top:137.5px;width:340px;height:2px;background:#0b4edb"></div>
<div class="box" style="left:1552px;top:154.5px;width:337px;height:35px;background:#fff;border:1px solid #a0b6e6;border-radius:3px"></div>
<div class="t" style="left:1571.00px;top:163.84px;font:normal 400 15.01px/1 'Liberation Sans';color:#2a3350;letter-spacing:-0.253px;">Category: All</div>
<svg style="left:1867.6px;top:169.5px" width="8" height="5" viewBox="0 0 9 5"><path d="M0 0h9l-4.5 4.5z" fill="#9a9ea8"/></svg>
<div class="box" style="left:1551.5px;top:199.4px;width:339px;height:121.1px;background:#fff;border:1px solid #9fb5e6;border-radius:4px"></div>
<div class="box" style="left:1551.5px;top:329.3px;width:339px;height:121.30000000000001px;background:#fff;border:1px solid #9fb5e6;border-radius:4px"></div>
<div class="box" style="left:1551.5px;top:459.6px;width:339px;height:120.69999999999993px;background:#fff;border:1px solid #9fb5e6;border-radius:4px"></div>
<svg style="left:1571px;top:220.5px" width="16" height="17" viewBox="0 0 16 17">
<path d="M2.2 14c1-1.1 1.4-2.6 1.4-5.3 0-2.8 1.9-5 4.4-5s4.4 2.2 4.4 5c0 2.7 0.4 4.2 1.4 5.3z" fill="none" stroke="#2f5fdc" stroke-width="1.3" stroke-linejoin="round"/>
<path d="M0.8 14h14.4" stroke="#2f5fdc" stroke-width="1.3"/><path d="M8 2v1.6M7 15.8h2" stroke="#2f5fdc" stroke-width="1.5" stroke-linecap="round"/>
</svg>
<svg style="left:1571px;top:350.5px" width="16" height="17" viewBox="0 0 16 17">
<path d="M2.2 14c1-1.1 1.4-2.6 1.4-5.3 0-2.8 1.9-5 4.4-5s4.4 2.2 4.4 5c0 2.7 0.4 4.2 1.4 5.3z" fill="none" stroke="#2f5fdc" stroke-width="1.3" stroke-linejoin="round"/>
<path d="M0.8 14h14.4" stroke="#2f5fdc" stroke-width="1.3"/><path d="M8 2v1.6M7 15.8h2" stroke="#2f5fdc" stroke-width="1.5" stroke-linecap="round"/>
</svg>
<svg style="left:1571px;top:480.5px" width="16" height="17" viewBox="0 0 16 17">
<path d="M2.2 14c1-1.1 1.4-2.6 1.4-5.3 0-2.8 1.9-5 4.4-5s4.4 2.2 4.4 5c0 2.7 0.4 4.2 1.4 5.3z" fill="none" stroke="#2f5fdc" stroke-width="1.3" stroke-linejoin="round"/>
<path d="M0.8 14h14.4" stroke="#2f5fdc" stroke-width="1.3"/><path d="M8 2v1.6M7 15.8h2" stroke="#2f5fdc" stroke-width="1.5" stroke-linecap="round"/>
</svg>
<div class="t" style="left:1600.70px;top:216.23px;font:normal 400 18.55px/1 'Liberation Sans';color:#1e2e6c;letter-spacing:0.435px;">Adobe FrameMaker 8</div>
<div class="t" style="left:1599.00px;top:239.48px;font:normal 400 14.49px/1 'Liberation Sans';color:#8b93ab;letter-spacing:0.204px;">In: Latest Subjects</div>
<div class="t" style="left:1787.00px;top:239.48px;font:normal 400 14.49px/1 'Liberation Sans';color:#8b93ab;letter-spacing:0.729px;">04/22/2017</div>
<div class="t" style="left:1597.50px;top:268.35px;font:normal 400 15.94px/1 'Liberation Sans';color:#1e2e6c;letter-spacing:0.722px;">New subject name available.</div>
<div class="t" style="left:1598.50px;top:288.15px;font:normal 400 15.94px/1 'Liberation Sans';color:#1e2e6c;letter-spacing:0.609px;text-decoration:underline;text-decoration-color:#8a94b8;text-underline-offset:3px;">View more</div>
<div class="t" style="left:1600.80px;top:346.43px;font:normal 400 18.55px/1 'Liberation Sans';color:#1e2e6c;letter-spacing:0.096px;">Child Care</div>
<div class="t" style="left:1599.00px;top:369.08px;font:normal 400 14.49px/1 'Liberation Sans';color:#8b93ab;letter-spacing:0.389px;">In: Subjects in Development04/21/2017</div>
<div class="t" style="left:1599.00px;top:398.45px;font:normal 400 15.94px/1 'Liberation Sans';color:#1e2e6c;letter-spacing:0.879px;">New subject in</div>
<div class="t" style="left:1600.00px;top:418.75px;font:normal 400 15.94px/1 'Liberation Sans';color:#1e2e6c;letter-spacing:0.786px;">development.Estimated release</div>
<div class="t" style="left:1599.80px;top:476.03px;font:normal 400 18.55px/1 'Liberation Sans';color:#1e2e6c;letter-spacing:0.466px;">New Tool – Upload Logo</div>
<div class="t" style="left:1599.00px;top:501.68px;font:normal 400 14.49px/1 'Liberation Sans';color:#8b93ab;letter-spacing:0.232px;">In: Latest Features</div>
<div class="t" style="left:1786.90px;top:501.68px;font:normal 400 14.49px/1 'Liberation Sans';color:#8b93ab;letter-spacing:0.696px;">04/20/2017</div>
<div class="t" style="left:1598.00px;top:528.15px;font:normal 400 15.94px/1 'Liberation Sans';color:#1e2e6c;letter-spacing:0.750px;">In the Customized Branding section</div>
<div class="t" style="left:1599.00px;top:548.35px;font:normal 400 15.94px/1 'Liberation Sans';color:#1e2e6c;letter-spacing:0.858px;">of Configuration page...</div>
<div class="t" style="left:1784.50px;top:548.35px;font:normal 400 15.94px/1 'Liberation Sans';color:#1e2e6c;letter-spacing:0.621px;text-decoration:underline;text-decoration-color:#8a94b8;text-underline-offset:3px;">View more</div>
<div class="t" style="left:1545.25px;top:648.99px;font:normal 400 20.72px/1 'Liberation Sans';color:#0b4edb;letter-spacing:0.745px;-webkit-text-stroke:0.58px #0b4edb;">Latest reports</div>
<svg style="left:1806px;top:654.5px" width="15" height="12" viewBox="0 0 15 12"><path d="M0 1h14M0 5.5h14M0 10h14" stroke="#f05a3c" stroke-width="1.5"/></svg>
<div class="t" style="left:1827.60px;top:653.65px;font:normal 400 15.23px/1 'Liberation Sans';color:#0b4edb;letter-spacing:-0.276px;">Show All</div>
<div class="a" style="left:1546px;top:688px;width:340px;height:2px;background:#0b4edb"></div>
<div class="box" style="left:1546px;top:717px;width:340px;height:36px;background:#fff;border:1px solid #a0b6e6;border-radius:4px"></div>
<div class="a" style="left:1582px;top:718px;width:1px;height:34px;background:#a0b6e6"></div>
<div class="a" style="left:1849px;top:718px;width:1px;height:34px;background:#a0b6e6"></div>
<svg style="left:1557px;top:729px" width="14" height="12" viewBox="0 0 14 12"><path d="M13 6H1.5M6.5 1L1.5 6l5 5" fill="none" stroke="#5b7fd6" stroke-width="1.2"/></svg>
<svg style="left:1861px;top:729px" width="14" height="12" viewBox="0 0 14 12"><path d="M1 6h11.5M7.5 1l5 5-5 5" fill="none" stroke="#5b7fd6" stroke-width="1.2"/></svg>
<div class="t" style="left:1597.00px;top:727.64px;font:normal 400 14.89px/1 'Liberation Sans';color:#2a3350;letter-spacing:-0.247px;">December 2017</div>
<svg style="left:1832.7px;top:733.3px" width="8" height="5" viewBox="0 0 9 5"><path d="M0 0h9l-4.5 4.5z" fill="#9a9ea8"/></svg>
<div class="box" style="left:1546px;top:767.5px;width:340px;height:383px;background:#fff;border:1px solid #a0b6e6;border-radius:4px"></div>
<div class="t" style="left:1557.00px;top:788.43px;font:normal 400 16.67px/1 'Liberation Sans';color:#1e2e6c;letter-spacing:0.495px;-webkit-text-stroke:0.37px #1e2e6c;">Top 8 tests based on candidate’s activity</div>
<div class="t" style="left:1555.00px;top:838.04px;font:normal 400 14.78px/1 'Liberation Sans';color:#0b4edb;letter-spacing:0.578px;">Date:</div>
<div class="t" style="left:1651.50px;top:838.84px;font:normal 400 14.78px/1 'Liberation Sans';color:#2a3350;letter-spacing:0.612px;">12/17/2017</div>
<div class="t" style="left:1555.00px;top:868.04px;font:normal 400 14.78px/1 'Liberation Sans';color:#0b4edb;letter-spacing:0.260px;">Reported by:</div>
<div class="t" style="left:1652.50px;top:869.05px;font:normal 400 14.06px/1 'Liberation Sans';color:#2a3350;letter-spacing:-0.049px;">John</div>
<div class="t" style="left:1555.00px;top:898.04px;font:normal 400 14.78px/1 'Liberation Sans';color:#0b4edb;letter-spacing:0.456px;">Format:</div>
<div class="t" style="left:1651.10px;top:899.46px;font:normal 400 13.58px/1 'Liberation Sans';color:#2a3350;letter-spacing:-0.081px;">PDF</div>
<svg style="left:0;top:0" width="1920" height="1455"><path d="M1613 952.25H1872" stroke="#cfd3da" stroke-width="0.8" stroke-dasharray="2.5 4"/><path d="M1613 968.4H1872" stroke="#cfd3da" stroke-width="0.8" stroke-dasharray="2.5 4"/><path d="M1613 984.3H1872" stroke="#cfd3da" stroke-width="0.8" stroke-dasharray="2.5 4"/><path d="M1613 1000.3H1872" stroke="#cfd3da" stroke-width="0.8" stroke-dasharray="2.5 4"/><path d="M1613 1015.3H1872" stroke="#cfd3da" stroke-width="0.8" stroke-dasharray="2.5 4"/><path d="M1613 1031.2H1872" stroke="#cfd3da" stroke-width="0.8" stroke-dasharray="2.5 4"/><path d="M1613 1047.1H1872" stroke="#cfd3da" stroke-width="0.8" stroke-dasharray="2.5 4"/><path d="M1613 1063.4H1872" stroke="#cfd3da" stroke-width="0.8" stroke-dasharray="2.5 4"/><rect x="1614" y="939.1" width="198" height="13.149999999999977" fill="#2a3f88"/><rect x="1812" y="939.1" width="9" height="13.149999999999977" fill="#ee5a44"/><rect x="1821" y="939.1" width="4.400000000000091" height="13.149999999999977" fill="#ffcf1a"/><rect x="1825.4" y="939.1" width="12.399999999999864" height="13.149999999999977" fill="#2fa39a"/><rect x="1614" y="955" width="11.900000000000091" height="13.399999999999977" fill="#ffd22a"/><rect x="1614" y="987.1" width="2.900000000000091" height="13.199999999999932" fill="#233a84"/><rect x="1616.9" y="987.1" width="11.799999999999955" height="13.199999999999932" fill="#ffd22a"/><rect x="1614" y="1002.5" width="38.90000000000009" height="13.100000000000023" fill="#2fa39a"/><rect x="1614" y="1018.4" width="49.75" height="13.600000000000023" fill="#182b70"/><rect x="1614" y="1050.9" width="5.2999999999999545" height="13.099999999999909" fill="#2fa39a"/></svg>
<div class="t" style="left:1555.60px;top:942.48px;font:normal 400 8.26px/1 'Liberation Sans';color:#3a4360;letter-spacing:-0.201px;">Excel 2016 Levi</div>
<div class="t" style="left:1555.60px;top:958.48px;font:normal 400 8.26px/1 'Liberation Sans';color:#3a4360;letter-spacing:0.148px;">Multitasking</div>
<div class="t" style="left:1555.60px;top:975.48px;font:normal 400 8.26px/1 'Liberation Sans';color:#3a4360;letter-spacing:0.017px;">Simulators</div>
<div class="t" style="left:1555.60px;top:991.38px;font:normal 400 8.26px/1 'Liberation Sans';color:#3a4360;letter-spacing:0.068px;">All types</div>
<div class="t" style="left:1555.60px;top:1009.18px;font:normal 400 8.26px/1 'Liberation Sans';color:#3a4360;letter-spacing:-0.068px;">Sk Manual</div>
<div class="t" style="left:1555.60px;top:1025.08px;font:normal 400 8.26px/1 'Liberation Sans';color:#3a4360;letter-spacing:-0.203px;">Excel 2016</div>
<div class="t" style="left:1555.60px;top:1041.98px;font:normal 400 8.26px/1 'Liberation Sans';color:#3a4360;">Word 2016</div>
<div class="t" style="left:1555.60px;top:1057.88px;font:normal 400 8.26px/1 'Liberation Sans';color:#9aa0b0;letter-spacing:-0.191px;">Expire Test</div>
<div class="t" style="left:1615.30px;top:1067.78px;font:normal 400 8.26px/1 'Liberation Sans';color:#a0a4ae;">0</div>
<div class="t" style="left:1663.81px;top:1067.78px;font:normal 400 8.26px/1 'Liberation Sans';color:#a0a4ae;">50</div>
<div class="t" style="left:1711.61px;top:1067.78px;font:normal 400 8.26px/1 'Liberation Sans';color:#a0a4ae;">100</div>
<div class="t" style="left:1761.71px;top:1067.78px;font:normal 400 8.26px/1 'Liberation Sans';color:#a0a4ae;">150</div>
<div class="t" style="left:1812.31px;top:1067.78px;font:normal 400 8.26px/1 'Liberation Sans';color:#a0a4ae;">200</div>
<div class="t" style="left:1862.41px;top:1067.78px;font:normal 400 8.26px/1 'Liberation Sans';color:#a0a4ae;">250</div>
<div class="box" style="left:1556px;top:1096.25px;width:146px;height:35.5px;background:#6c93d8;border-radius:3px"></div>
<div class="box" style="left:1707px;top:1096.25px;width:170px;height:35.5px;background:#ff3300;border-radius:3px"></div>
<svg style="left:1579px;top:1107px" width="16" height="11" viewBox="0 0 16 11"><path d="M1 5.5C3 2.5 5.3 1 8 1s5 1.5 7 4.5c-2 3-4.3 4.5-7 4.5S3 8.5 1 5.5z" fill="none" stroke="#fff" stroke-width="1.1"/>
<circle cx="8" cy="5.5" r="2.5" fill="none" stroke="#fff" stroke-width="1.1"/></svg>
<div class="t" style="left:1600.00px;top:1106.68px;font:normal 400 14.2px/1 'Liberation Sans';color:#fff;letter-spacing:0.112px;">View Report</div>
<svg style="left:1724.5px;top:1107.5px" width="16" height="13" viewBox="0 0 16 13"><path d="M8 0.5v8M4.5 5.5L8 9l3.5-3.5" fill="none" stroke="#fff" stroke-width="1.3"/>
<path d="M1 7.5v4.5h14v-4.5" fill="none" stroke="#fff" stroke-width="1.3"/></svg>
<div class="t" style="left:1745.25px;top:1106.68px;font:normal 400 14.2px/1 'Liberation Sans';color:#fff;letter-spacing:0.309px;">Download Report</div>
</body></html>
